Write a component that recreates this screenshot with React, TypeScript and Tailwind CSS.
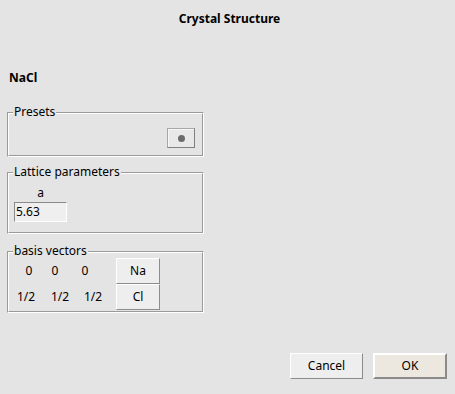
import React from 'react';

const raised =
  'flex items-center justify-center bg-[#eeeeee] border border-t-white border-l-white border-r-[#8c8c8c] border-b-[#8c8c8c]';

function Group({ label, className, children }: { label: string; className: string; children?: React.ReactNode }) {
  return (
    <div className={`relative ml-[7px] w-[197px] border border-t-[#9a9a9a] border-l-[#9a9a9a] border-r-white border-b-white ${className}`}>
      <div className="h-full border border-t-white border-l-white border-r-[#9a9a9a] border-b-[#9a9a9a]">
        {children}
      </div>
      {/* caption sits over the groove line */}
      <span className="absolute -top-[9px] left-[5px] px-[1px] leading-[16px] bg-[#e4e4e4]">{label}</span>
    </div>
  );
}

export default function App() {
  const rows = [
    { cells: ['0', '0', '0'], gaps: ['ml-[10px]', 'ml-[6px]', 'ml-[10px]'], btn: 'ml-[21px]', atom: 'Na' },
    { cells: ['1/2', '1/2', '1/2'], gaps: ['ml-[7px]', 'ml-[14px]', 'ml-[13px]'], btn: 'ml-[13px]', atom: 'Cl' },
  ];

  return (
    <div className="w-[455px] h-[394px] bg-[#e4e4e4] text-[12px] text-black flex flex-col font-['Noto_Sans',sans-serif]">
      <div className="pt-[11px] pl-[4px] leading-[16px] text-center font-bold">Crystal Structure</div>
      <div className="mt-[43px] pl-[9px] leading-[16px] font-bold">NaCl</div>

      <Group label="Presets" className="mt-[26px] h-[45px]">
        <div className="flex justify-end pr-[7px] pt-[14px]">
          <button className="w-[28px] h-[20px] flex items-center justify-center bg-[#e8e8e8] border border-t-[#a8a8a8] border-l-[#a8a8a8] border-r-[#808080] border-b-[#808080] shadow-[inset_1px_1px_0_#f6f6f6]">
            <span className="w-[7px] h-[7px] rounded-full bg-[#6b6b6b]" />
          </button>
        </div>
      </Group>

      <Group label="Lattice parameters" className="mt-[15px] h-[62px]">
        <div className="pt-[11px] pl-[5px]">
          <div className="w-[53px] leading-[16px] text-center">a</div>
          <div className="mt-[1px] w-[53px] h-[20px] flex items-center pl-[1px] bg-[#efefef] border border-t-[#8a8a8a] border-l-[#8a8a8a] border-r-white border-b-white">
            5.63
          </div>
        </div>
      </Group>

      <Group label="basis vectors" className="mt-[17px] h-[62px]">
        <div className="pt-[5px] flex flex-col">
          {rows.map((row) => (
            <div key={row.atom} className="flex items-center h-[26px]">
              {row.cells.map((c, i) => (
                <span key={i} className={`w-[20px] text-center whitespace-nowrap ${row.gaps[i]}`}>
                  {c}
                </span>
              ))}
              <button className={`w-[44px] h-[26px] ${raised} ${row.btn}`}>{row.atom}</button>
            </div>
          ))}
        </div>
      </Group>

      <div className="mt-[40px] flex justify-end gap-[10px] pr-[8px]">
        <button className={`w-[73px] h-[26px] ${raised}`}>Cancel</button>
        <button className="w-[74px] h-[26px] flex items-center justify-center bg-[#ece8df] border-2 border-t-white border-l-white border-r-[#8a8a8a] border-b-[#8a8a8a]">
          OK
        </button>
      </div>
    </div>
  );
}
